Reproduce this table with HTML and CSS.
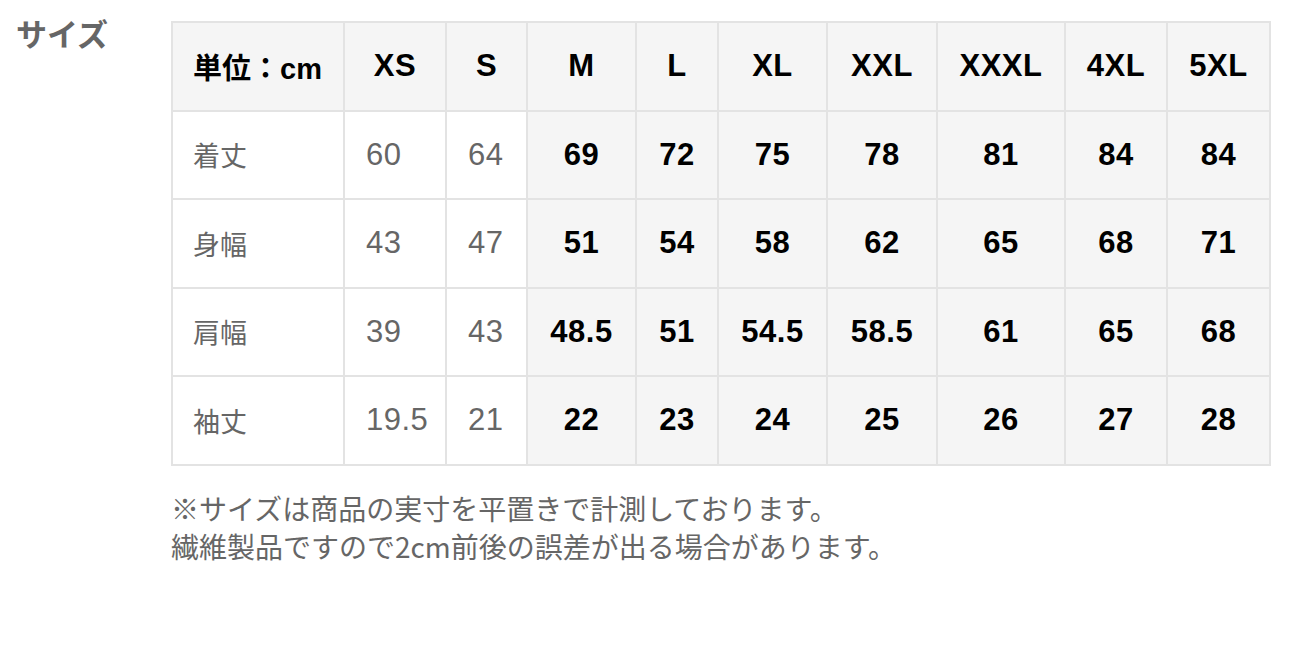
FILE: index.html
```html
<!DOCTYPE html>
<html lang="ja">
<head>
<meta charset="utf-8">
<link rel="stylesheet" href="styles.css">
</head>
<body>
<div class="page">
  <div class="label">サイズ</div>
  <div class="content">
    <table class="size-table">
      <colgroup>
        <col class="c0"><col class="c1"><col class="c2"><col class="c3"><col class="c4">
        <col class="c5"><col class="c6"><col class="c7"><col class="c8"><col class="c9">
      </colgroup>
      <thead>
        <tr>
          <th class="unit">単位：cm</th>
          <th>XS</th><th>S</th><th>M</th><th>L</th><th>XL</th><th>XXL</th><th>XXXL</th><th>4XL</th><th>5XL</th>
        </tr>
      </thead>
      <tbody>
        <tr>
          <td class="name">着丈</td><td class="sub">60</td><td class="sub">64</td>
          <td class="val">69</td><td class="val">72</td><td class="val">75</td><td class="val">78</td><td class="val">81</td><td class="val">84</td><td class="val">84</td>
        </tr>
        <tr>
          <td class="name">身幅</td><td class="sub">43</td><td class="sub">47</td>
          <td class="val">51</td><td class="val">54</td><td class="val">58</td><td class="val">62</td><td class="val">65</td><td class="val">68</td><td class="val">71</td>
        </tr>
        <tr>
          <td class="name">肩幅</td><td class="sub">39</td><td class="sub">43</td>
          <td class="val">48.5</td><td class="val">51</td><td class="val">54.5</td><td class="val">58.5</td><td class="val">61</td><td class="val">65</td><td class="val">68</td>
        </tr>
        <tr>
          <td class="name">袖丈</td><td class="sub">19.5</td><td class="sub">21</td>
          <td class="val">22</td><td class="val">23</td><td class="val">24</td><td class="val">25</td><td class="val">26</td><td class="val">27</td><td class="val">28</td>
        </tr>
      </tbody>
    </table>
    <p class="note">※サイズは商品の実寸を平置きで計測しております。<br>繊維製品ですので2cm前後の誤差が出る場合があります。</p>
  </div>
</div>
</body>
</html>
```

FILE: styles.css
```css
html, body {
  margin: 0;
  padding: 0;
  background: #ffffff;
}
body {
  font-family: "Liberation Sans", "Noto Sans CJK JP", sans-serif;
  color: #000;
}
.page {
  display: flex;
  align-items: flex-start;
}
.label {
  width: 155px;
  padding-left: 16px;
  padding-top: 13px;
  font-family: "Noto Sans CJK JP", sans-serif;
  font-weight: 700;
  font-size: 31px;
  line-height: 40px;
  color: #666666;
}
.content {
  padding-top: 21px;
}
.size-table {
  border-collapse: collapse;
  table-layout: fixed;
  width: 1098px;
}
.c0 { width: 172px; }
.c1 { width: 102px; }
.c2 { width: 81px; }
.c3 { width: 109px; }
.c4 { width: 82px; }
.c5 { width: 109px; }
.c6 { width: 110px; }
.c7 { width: 128px; }
.c8 { width: 102px; }
.c9 { width: 103px; }
.size-table th,
.size-table td {
  border: 2px solid #e3e3e3;
  height: 86.5px;
  padding: 0;
  font-size: 31px;
  letter-spacing: 0.5px;
  text-align: center;
  vertical-align: middle;
}
.size-table th {
  background: #f5f5f5;
  font-weight: 700;
  color: #000;
}
.size-table th.unit {
  text-align: left;
  padding-left: 20px;
  font-size: 29px;
  letter-spacing: 0;
}
.size-table td.name {
  text-align: left;
  padding-left: 20px;
  font-family: "Noto Sans CJK JP", sans-serif;
  font-size: 27px;
  letter-spacing: 0;
  color: #666666;
  background: #ffffff;
}
.size-table td.sub {
  text-align: left;
  padding-left: 21px;
  color: #666666;
  background: #ffffff;
}
.size-table td.val {
  font-weight: 700;
  background: #f5f5f5;
  color: #000;
}
.note {
  margin: 23px 0 0 0;
  font-family: "Noto Sans CJK JP", sans-serif;
  font-size: 28px;
  line-height: 38px;
  color: #666666;
}
```
